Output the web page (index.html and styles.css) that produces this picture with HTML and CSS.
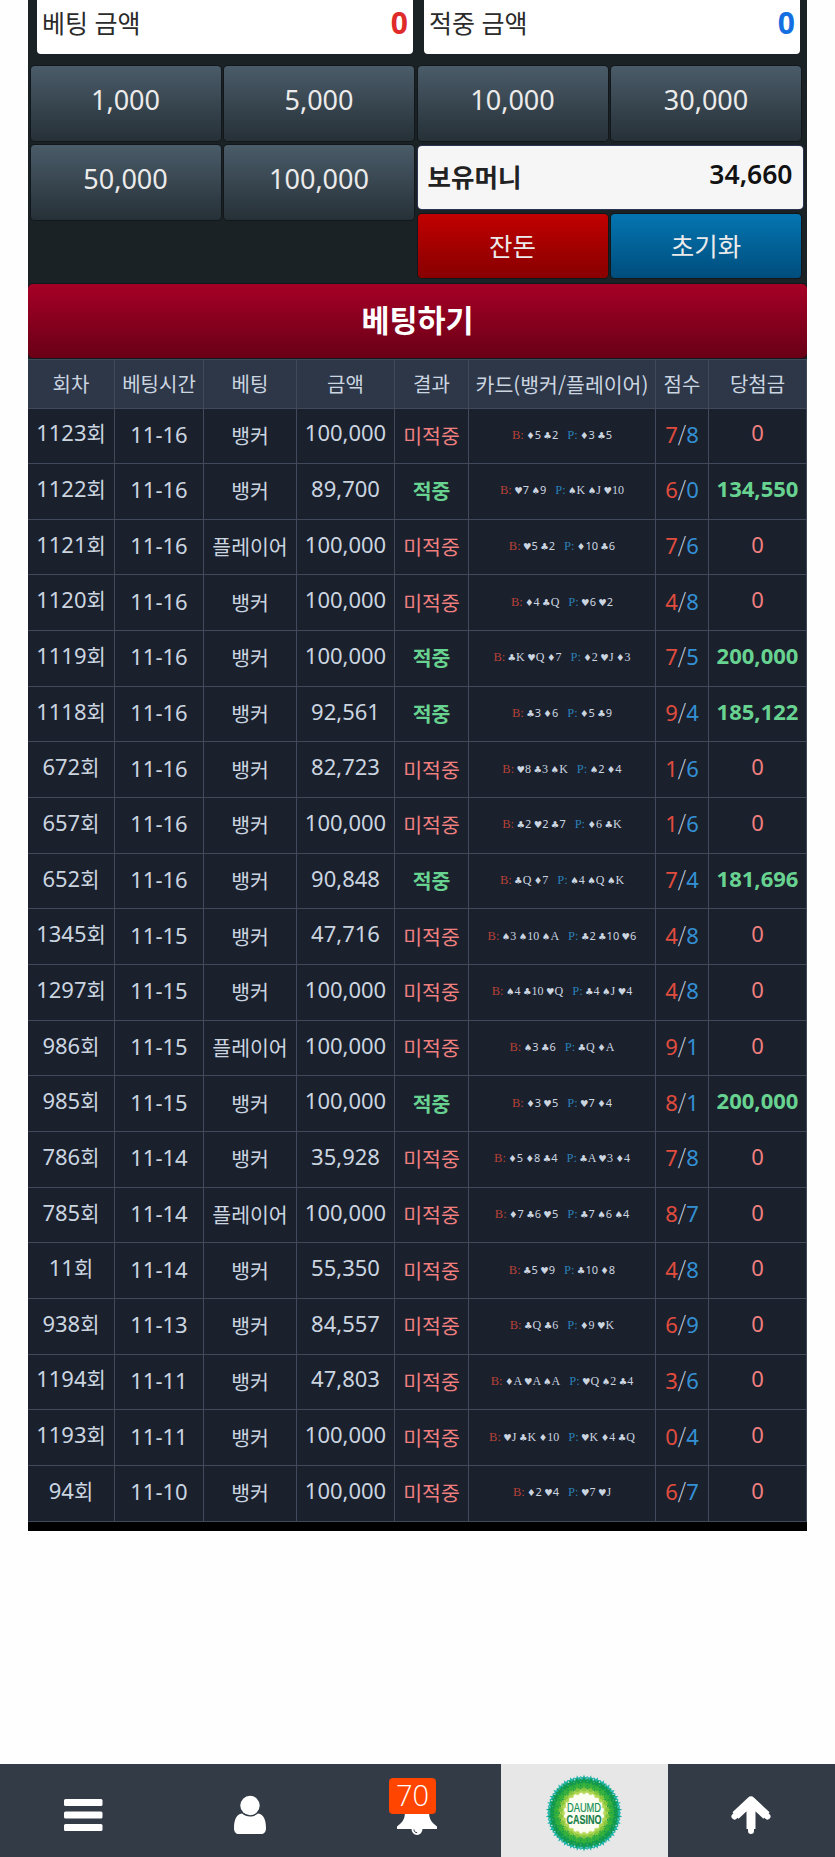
FILE: index.html
```html
<!DOCTYPE html>
<html lang="ko">
<head>
    <meta charset="UTF-8">
    <meta name="viewport" content="width=device-width, initial-scale=1.0">
    <title>DAUMD CASINO</title>
    <link rel="stylesheet" href="styles.css">
</head>
<body>
    <div class="main">
        <div class="amounts">
            <div class="amount"><span>베팅 금액</span><b class="red">0</b></div>
            <div class="amount"><span>적중 금액</span><b class="blue">0</b></div>
        </div>
        <div class="pad">
            <button class="chip">1,000</button>
            <button class="chip">5,000</button>
            <button class="chip">10,000</button>
            <button class="chip">30,000</button>
            <button class="chip">50,000</button>
            <button class="chip">100,000</button>
            <div class="wallet">
                <div class="money"><span>보유머니</span><b>34,660</b></div>
                <div class="actions">
                    <button class="chip change">잔돈</button>
                    <button class="chip reset">초기화</button>
                </div>
            </div>
        </div>
        <button class="bet">베팅하기</button>
        <div class="history" id="history">
            <div class="row head">
                <span>회차</span><span>베팅시간</span><span>베팅</span><span>금액</span><span>결과</span><span class="wide">카드(뱅커/플레이어)</span><span>점수</span><span>당첨금</span>
            </div>
        </div>
    </div>

    <nav class="bottom">
        <a class="item">
            <svg width="40" height="40" viewBox="0 0 40 40"><g fill="#fff"><rect x="1" y="4" width="38.500" height="7" rx="1.500"/><rect x="1" y="16.500" width="38.500" height="7" rx="1.500"/><rect x="1" y="29" width="38.500" height="7" rx="1.500"/></g></svg>
        </a>
        <a class="item">
            <svg width="40" height="40" viewBox="0 0 40 40"><path d="M12 18.500C6 19 4 26 4 33c0 4 2 6 5 6h22c3 0 5-2 5-6 0-7-2-14-8-14.500-4.500 4-11.500 4-16 0z" fill="#fff"/><circle cx="20" cy="10.500" r="9.700" fill="#fff"/></svg>
        </a>
        <a class="item">
            <svg width="42" height="42" viewBox="0 0 42 42"><path d="M21 3c-9 0-12 6-12 14 0 8-2 11-8 15.500V35h14.500a5.500 6 0 0 0 11 0H41v-2.500C35 28 33 25 33 17c0-8-3-14-12-14z" fill="#fff"/><path d="M18 35.500c0 2 1.200 3.200 3.200 3.200" fill="none" stroke="#323a45" stroke-width="1"/></svg>
            <span class="badge">70</span>
        </a>
        <a class="item logo">
            <svg width="78" height="78" viewBox="-39 -39 78 78">
                <circle r="32" fill="#23a04a"/>
                <circle r="24" fill="#b9d95c"/>
                <circle r="20.500" fill="#fbfdf0"/>
                <g id="wreath"></g>
                <text class="brand" y="-1.500" textLength="34" lengthAdjust="spacingAndGlyphs">DAUMD</text>
                <text class="brand bold" y="10.500" textLength="35" lengthAdjust="spacingAndGlyphs">CASINO</text>
            </svg>
        </a>
        <a class="item">
            <svg width="40" height="40" viewBox="0 0 40 40"><path d="M4.500 20.500L20 6l15.500 14.500M20 9v25" fill="none" stroke="#fff" stroke-width="9" stroke-linejoin="round"/><path d="M3.500 21.500L20 6l16.500 15.500M20 9v27" fill="none" stroke="#fff" stroke-width="6" stroke-linecap="round" stroke-linejoin="round"/></svg>
        </a>
    </nav>

    <script>
        // round, date, side, amount, banker cards, player cards, score, prize
        const bets = [
            ['1123', '11-16', '뱅커', '100,000', '♦5 ♣2', '♦3 ♣5', '7/8', '0'],
            ['1122', '11-16', '뱅커', '89,700', '♥7 ♠9', '♠K ♠J ♥10', '6/0', '134,550'],
            ['1121', '11-16', '플레이어', '100,000', '♥5 ♣2', '♦10 ♣6', '7/6', '0'],
            ['1120', '11-16', '뱅커', '100,000', '♦4 ♣Q', '♥6 ♥2', '4/8', '0'],
            ['1119', '11-16', '뱅커', '100,000', '♣K ♥Q ♦7', '♦2 ♥J ♦3', '7/5', '200,000'],
            ['1118', '11-16', '뱅커', '92,561', '♣3 ♦6', '♦5 ♣9', '9/4', '185,122'],
            ['672', '11-16', '뱅커', '82,723', '♥8 ♣3 ♠K', '♠2 ♦4', '1/6', '0'],
            ['657', '11-16', '뱅커', '100,000', '♣2 ♥2 ♣7', '♦6 ♣K', '1/6', '0'],
            ['652', '11-16', '뱅커', '90,848', '♣Q ♦7', '♠4 ♠Q ♠K', '7/4', '181,696'],
            ['1345', '11-15', '뱅커', '47,716', '♠3 ♠10 ♠A', '♣2 ♣10 ♥6', '4/8', '0'],
            ['1297', '11-15', '뱅커', '100,000', '♠4 ♣10 ♥Q', '♣4 ♠J ♥4', '4/8', '0'],
            ['986', '11-15', '플레이어', '100,000', '♠3 ♣6', '♣Q ♦A', '9/1', '0'],
            ['985', '11-15', '뱅커', '100,000', '♦3 ♥5', '♥7 ♦4', '8/1', '200,000'],
            ['786', '11-14', '뱅커', '35,928', '♦5 ♦8 ♣4', '♣A ♥3 ♦4', '7/8', '0'],
            ['785', '11-14', '플레이어', '100,000', '♦7 ♣6 ♥5', '♣7 ♠6 ♠4', '8/7', '0'],
            ['11', '11-14', '뱅커', '55,350', '♣5 ♥9', '♣10 ♦8', '4/8', '0'],
            ['938', '11-13', '뱅커', '84,557', '♣Q ♣6', '♦9 ♥K', '6/9', '0'],
            ['1194', '11-11', '뱅커', '47,803', '♦A ♥A ♠A', '♥Q ♠2 ♣4', '3/6', '0'],
            ['1193', '11-11', '뱅커', '100,000', '♥J ♣K ♦10', '♥K ♦4 ♣Q', '0/4', '0'],
            ['94', '11-10', '뱅커', '100,000', '♦2 ♥4', '♥7 ♥J', '6/7', '0']
        ];

        function hand(label, cards) {
            const face = /[AJQK]/.test(cards) ? 'face' : '';
            return '<span class="hand"><i class="' + label + '">' + label + ':</i> <span class="' + face + '">' +
                cards.replace(/[♠♣♥♦]/g, '<s>$&</s>') + '</span></span>';
        }

        let rows = '';
        for (const [round, date, side, amount, banker, player, score, prize] of bets) {
            const win = prize !== '0';
            const [b, p] = score.split('/');
            rows += '<div class="row">' +
                '<span class="up">' + round + '<em>회</em></span>' +
                '<span class="date">' + date + '</span>' +
                '<span class="side">' + side + '</span>' +
                '<span class="up">' + amount + '</span>' +
                '<span class="side ' + (win ? 'win' : 'lose') + '">' + (win ? '적중' : '미적중') + '</span>' +
                '<span class="cards">' + hand('B', banker) + hand('P', player) + '</span>' +
                '<span class="score"><i>' + b + '</i><em>/</em><u>' + p + '</u></span>' +
                '<span class="up ' + (win ? 'win' : 'lose') + '">' + prize + '</span>' +
                '</div>';
        }
        document.getElementById('history').innerHTML += rows;

        // ---------- leaves of the logo: radius, count, size, colour ----------
        const rings = [
            [34, 34, 1.1, '#1fb3a8'],
            [31.500, 30, 1.2, '#12994d'],
            [27.500, 26, 1.1, '#35b03c'],
            [23.500, 22, 0.9, '#86c63d'],
            [20.500, 20, 0.6, '#b3d755']
        ];
        let leaves = '';
        for (const [radius, count, size, color] of rings) {
            for (let i = 0; i < count; i++) {
                leaves += '<path fill="' + color + '" transform="rotate(' + (i * 360 / count) + ') translate(0 ' + -radius +
                    ') scale(' + size + ')" d="M0-4L1-1.500 3.500-2.500 2.300 0 3.500 2 1 1.500 0 4-1 1.500-3.500 2-2.300 0-3.500-2.500-1-1.500z"/>';
            }
        }
        document.getElementById('wreath').innerHTML = leaves;
    </script>
</body>
</html>
```
FILE: styles.css
```css
* {
    box-sizing: border-box;
}

body {
    margin: 0;
    background-color: #fefefe;
    font-family: "Noto Sans", "Noto Sans CJK KR", sans-serif;
    height: 1857px;
    display: flex;
    flex-direction: column;
}

button {
    font-family: inherit;
    border: 0;
    padding: 0;
}

.main {
    margin-left: 28px;
    width: 779px;
    height: 1531px;
    background-color: #1b2225;
    border-bottom: 9px solid #000;
    overflow: hidden;
}

.amounts {
    display: flex;
    gap: 11px;
    padding: 0 7px 0 9px;
}

.amount {
    flex: 1;
    height: 54px;
    background-color: #fff;
    border-radius: 0 0 4px 4px;
    display: flex;
    justify-content: space-between;
    padding: 0 5px;
    font-size: 25px;
    line-height: 47px;
    color: #2b2b2b;
}

.amount b {
    font-size: 30px;
    line-height: 46px;
}

.red {
    color: #e02b2b;
}

.blue {
    color: #156fe0;
}

.pad {
    display: grid;
    grid-template-columns: repeat(4, 190px);
    column-gap: 3.500px;
    row-gap: 4px;
    height: 218px;
    margin: 12px 0 0 2.500px;
    align-content: start;
}

.chip {
    height: 75px;
    border-radius: 4px;
    background: linear-gradient(#4a5c69, #263037);
    box-shadow: 0 0 0 1px #11171a;
    color: #ecebeb;
    font-size: 27px;
    padding-bottom: 8px;
}

.wallet {
    grid-column: 3 / 5;
    margin-top: 1px;
}

.money {
    width: 385px;
    height: 63px;
    border-radius: 4px;
    background-color: #f6f6f7;
    box-shadow: 0 0 0 1px #2d3453;
    display: flex;
    justify-content: space-between;
    padding: 0 10px;
    font-size: 25.500px;
    font-weight: bold;
    line-height: 62px;
    color: #222;
}

.money b {
    font-weight: 600;
    font-size: 26.500px;
    line-height: 56px;
    color: #111;
}

.actions {
    display: flex;
    gap: 3.500px;
    margin-top: 5px;
}

.actions .chip {
    width: 190px;
    height: 64px;
    font-size: 25.500px;
    padding-bottom: 4px;
}

.change {
    background: linear-gradient(#c10000, #870000);
}

.reset {
    background: linear-gradient(#0475b1, #004d7c);
}

.bet {
    display: block;
    width: 779px;
    height: 74px;
    border-radius: 5px;
    background: linear-gradient(#a60026, #690016);
    box-shadow: 0 0 0 1px #11171a;
    color: #fff;
    font-size: 30.500px;
    font-weight: bold;
    padding-bottom: 4px;
}

.history {
    padding-top: 1px;
    color: #cbd5e0;
}

.row {
    display: grid;
    grid-template-columns: 87px 89px 93px 98px 74px 187px 53px 98px;
    height: 55.670px;
    background-color: #1a202c;
    font-size: 22px;
}

.row > span {
    display: flex;
    align-items: center;
    justify-content: center;
    border-right: 1px solid #404a5a;
    border-bottom: 1px solid #404a5a;
    white-space: nowrap;
}

.head {
    height: 49.500px;
    background-color: #2d3748;
    font-size: 20px;
    border-top: 1px solid #404a5a;
}

.wide {
    font-family: "Noto Sans CJK KR", sans-serif;
    font-size: 20.500px;
}

.row .up {
    padding-bottom: 7px;
}

.row em {
    font-style: normal;
    font-size: 21px;
}

.row .side {
    font-size: 20.500px;
    padding-bottom: 2px;
}

.date {
    padding-bottom: 4px;
}

.win {
    color: #68d391;
    font-weight: bold;
}

.lose {
    color: #ef7f7f;
}

.cards {
    gap: 9px;
    font-size: 11px;
    padding-bottom: 2px;
    word-spacing: -0.500px;
}

.cards i {
    font-family: "Liberation Serif", serif;
    font-style: normal;
    font-size: 12.500px;
}

.cards s {
    font-family: "DejaVu Sans", sans-serif;
    font-size: 9.500px;
    text-decoration: none;
}

.face {
    font-family: "Liberation Serif", serif;
    font-size: 12px;
}

.B {
    color: #b84238;
}

.P {
    color: #2b7fb5;
}

.row .score {
    padding-bottom: 4px;
}

.score i {
    font-style: normal;
    color: #e04c3e;
}

.score u {
    text-decoration: none;
    color: #3490d4;
}

.score em {
    font-family: "Noto Sans CJK KR", sans-serif;
    font-weight: 300;
}

.bottom {
    display: flex;
    height: 93px;
    margin-top: auto;
    background-color: #323b46;
}

.item {
    flex: 1;
    display: flex;
    align-items: center;
    justify-content: center;
    padding: 9px 2px 0 0;
    position: relative;
}

.badge {
    position: absolute;
    left: 55px;
    top: 14px;
    width: 47px;
    height: 36px;
    border-radius: 4px;
    background-color: #ff4500;
    color: #fff;
    font-family: "Open Sans", sans-serif;
    font-weight: 300;
    font-size: 29px;
    line-height: 34px;
    text-align: center;
}

.logo {
    background-color: #e7e7e7;
    padding-top: 4px;
}

.brand {
    font-family: "Liberation Sans", sans-serif;
    font-size: 12.500px;
    fill: #149055;
    stroke: #149055;
    stroke-width: 0.200px;
    text-anchor: middle;
}

.bold {
    font-weight: bold;
    fill: #187a48;
}
```
